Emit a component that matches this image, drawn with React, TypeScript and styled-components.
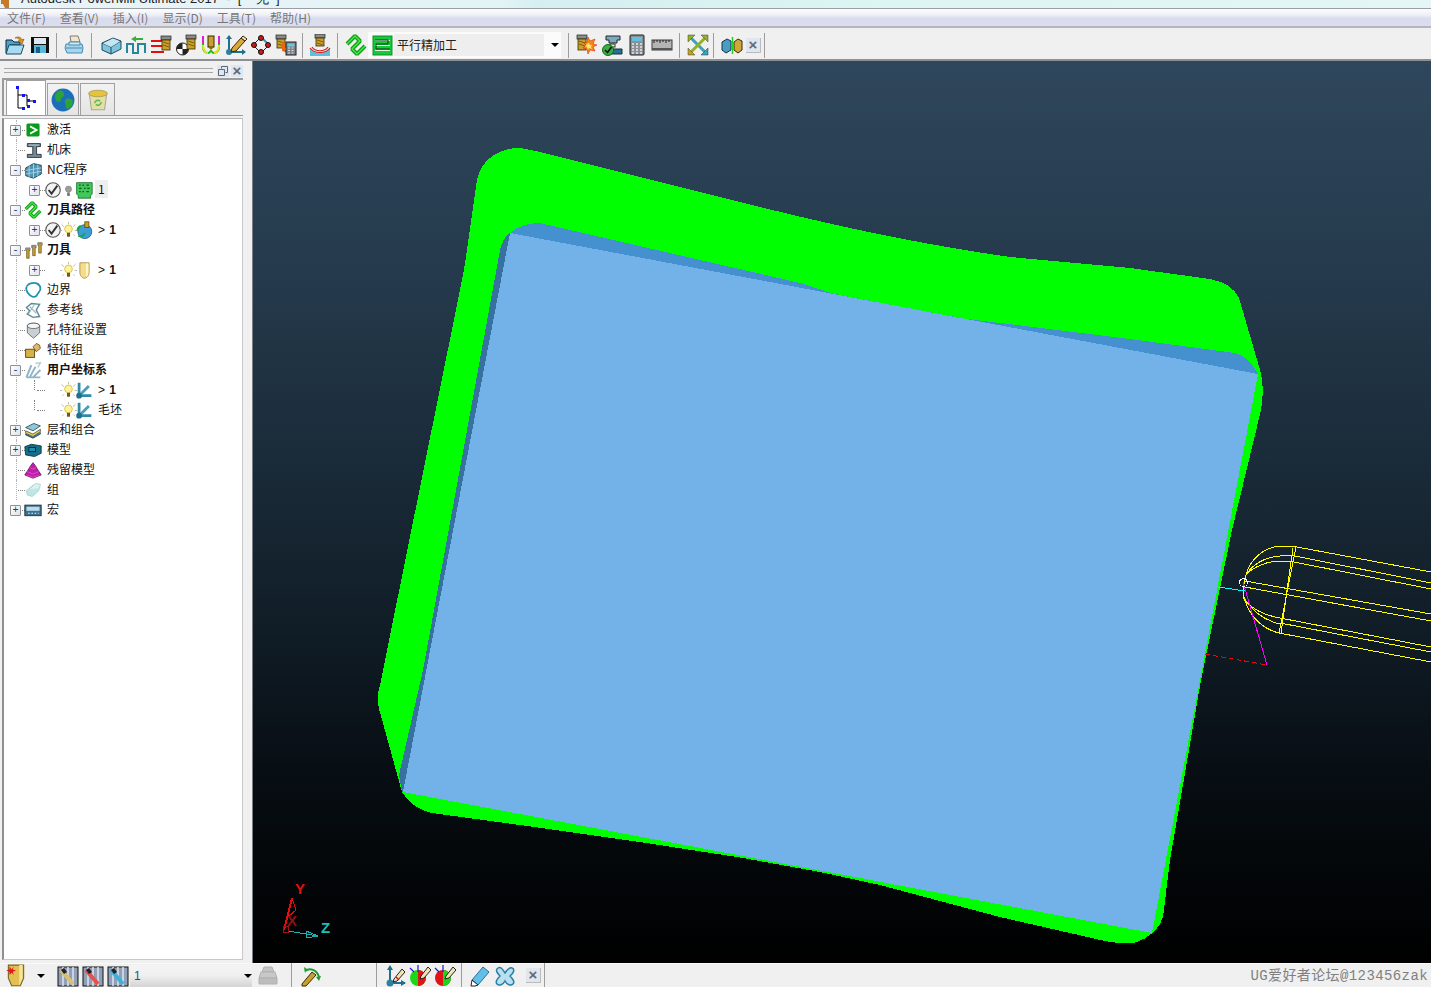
import React from 'react';
import styled, { createGlobalStyle } from 'styled-components';

const GlobalStyle = createGlobalStyle`
  html, body { margin: 0; padding: 0; overflow: hidden; background: #f0f0f0; }
  body { font-family: "Noto Sans CJK SC", "Liberation Sans", sans-serif; }
`;

const Page = styled.div`
  width: 1431px;
  height: 987px;
  display: flex;
  flex-direction: column;
  overflow: hidden;
  background: #f0f0f0;
`;

const TitleStrip = styled.div`
  height: 8px;
  background: linear-gradient(90deg, #eaf3f6 0%, #e2f4f6 35%, #d6eef0 38%, #dcf4f2 60%, #e4f6f6 100%);
  border-bottom: 1px solid #9a9fa6;
  overflow: hidden;
  display: flex;
  padding-left: 1px;
`;

const TitleText = styled.span`
  font: 13px/13px "Liberation Sans", sans-serif;
  color: #222;
  margin-top: -8px;
  margin-left: 12px;
  white-space: pre;
`;

const MenuBar = styled.div`
  height: 17px;
  padding-left: 7px;
  display: flex;
  gap: 14px;
  align-items: center;
  background: linear-gradient(180deg, #fdfdfe 0%, #eef0f7 35%, #d9dcee 55%, #dcdeef 100%);
  border-bottom: 2px solid #b4b6bc;
`;

const MenuItem = styled.span`
  font: 12px/17px "Noto Sans CJK SC", sans-serif;
  color: #777;
  white-space: nowrap;
`;

const Toolbar = styled.div`
  height: 28px;
  padding: 3px 0 0 2px;
  display: flex;
  align-items: center;
  background: #f0f0f0;
  border-bottom: 2px solid #8c8f94;
`;

const ToolButton = styled.div<{ $w?: number; $ml?: number }>`
  width: ${(p) => p.$w ?? 25}px;
  height: 24px;
  flex: none;
  margin-left: ${(p) => p.$ml ?? 0}px;
  display: flex;
  align-items: center;
  justify-content: center;
`;

const Sep = styled.div<{ $l: number; $r: number }>`
  width: 1px;
  height: 25px;
  flex: none;
  background: #9c9c9c;
  margin-left: ${(p) => p.$l}px;
  margin-right: ${(p) => p.$r}px;
`;

const Combo = styled.div`
  width: 193px;
  height: 26px;
  flex: none;
  display: flex;
  align-items: center;
  padding-left: 4px;
  box-sizing: border-box;
  background: #fbfbfb;
`;

const ComboField = styled.div`
  width: 150px;
  height: 22px;
  padding-left: 3px;
  box-sizing: border-box;
  background: #eeeeee;
  font: 12px/22px "Noto Sans CJK SC", sans-serif;
  color: #222;
`;

const DownArrow = styled.span<{ $ml: number }>`
  width: 0;
  height: 0;
  flex: none;
  margin-left: ${(p) => p.$ml}px;
  border-left: 4px solid transparent;
  border-right: 4px solid transparent;
  border-top: 4px solid #000;
`;

const CloseBox = styled.div<{ $ml: number }>`
  width: 14px;
  height: 14px;
  flex: none;
  margin-left: ${(p) => p.$ml}px;
  background: #dfe6f0;
  border-right: 1px solid #bbb;
  border-bottom: 1px solid #bbb;
  color: #5f6974;
  font: bold 15px/14px "Liberation Sans", sans-serif;
  text-align: center;
`;

const Main = styled.div`
  flex: 1;
  min-height: 0;
  display: flex;
`;

const SidePanel = styled.div`
  width: 253px;
  flex: none;
  box-sizing: border-box;
  padding: 3px 9px 3px 2px;
  display: flex;
  flex-direction: column;
  background: #f0f0f0;
  border-right: 1px solid #7a7d82;
`;

const Grip = styled.div`
  height: 13px;
  flex: none;
  display: flex;
  align-items: center;
  gap: 2px;
  padding-left: 2px;
`;

const GripLines = styled.div`
  width: 210px;
  height: 3px;
  margin-right: 2px;
  border-top: 1px solid #a8a8a8;
  border-bottom: 1px solid #a8a8a8;
`;

const GripButton = styled.div`
  width: 12px;
  height: 12px;
  flex: none;
  background: #dde6f2;
  color: #5f6974;
  display: flex;
  align-items: center;
  justify-content: center;
  font: bold 15px/12px "Liberation Sans", sans-serif;
`;

const TabBar = styled.div`
  height: 38px;
  width: 241px;
  flex: none;
  margin-top: 1px;
  padding: 1px 0 0 2px;
  display: flex;
  align-items: flex-end;
  box-sizing: border-box;
  border-top: 2px solid #9b9b9b;
  border-left: 2px solid #9b9b9b;
  border-bottom: 1px solid #9b9b9b;
`;

const Tab = styled.div<{ $active?: boolean; $w: number }>`
  width: ${(p) => p.$w}px;
  height: ${(p) => (p.$active ? 35 : 32)}px;
  flex: none;
  box-sizing: border-box;
  display: flex;
  align-items: center;
  justify-content: center;
  border: 1px solid #a0a0a0;
  border-bottom: none;
  background: ${(p) => (p.$active ? '#ffffff' : 'linear-gradient(180deg, #f2f2f2 0%, #e4e4e4 100%)')};
  margin-right: 1px;
`;

const TreeBox = styled.div`
  flex: 1;
  width: 241px;
  margin-top: 2px;
  padding-top: 1px;
  box-sizing: border-box;
  background: #fff;
  border-left: 2px solid #8f8f8f;
  border-right: 1px solid #c8c8c8;
  border-bottom: 1px solid #c8c8c8;
  border-top: 1px solid #b8b8b8;
`;

const Row = styled.div<{ $indent: number; $trunk?: boolean; $branch?: boolean }>`
  position: relative;
  height: 20px;
  margin-left: -2px;
  padding-left: ${(p) => p.$indent}px;
  display: flex;
  align-items: center;
  &::before {
    content: '';
    display: ${(p) => (p.$trunk ? 'block' : 'none')};
    position: absolute;
    left: 14px;
    top: 0;
    bottom: 0;
    border-left: 1px dotted #b4b4b4;
  }
  &::after {
    content: '';
    display: ${(p) => (p.$branch ? 'block' : 'none')};
    position: absolute;
    left: 32px;
    top: 0;
    height: 10px;
    border-left: 1px dotted #808080;
  }
`;

const Expander = styled.div`
  position: relative;
  z-index: 1;
  width: 9px;
  height: 9px;
  flex: none;
  border: 1px solid #8d9095;
  border-radius: 1px;
  background: linear-gradient(135deg, #fff, #dfe2e6);
  color: #24368a;
  font: 10px/9px "Liberation Mono", monospace;
  text-align: center;
  overflow: hidden;
  box-sizing: content-box;
  margin-right: -1px;
`;

const ExpanderGap = styled.div<{ $w: number }>`
  width: ${(p) => p.$w}px;
  flex: none;
`;

const Dots = styled.div<{ $w: number }>`
  width: ${(p) => p.$w}px;
  flex: none;
  height: 0;
  border-top: 1px dotted #808080;
`;

const IconSlot = styled.div<{ $w: number }>`
  width: ${(p) => p.$w}px;
  height: 18px;
  flex: none;
  display: flex;
  align-items: center;
  justify-content: center;
  svg { flex: none; }
`;

const Label = styled.span<{ $strong?: boolean; $selected?: boolean; $ml: number }>`
  margin-left: ${(p) => p.$ml}px;
  margin-bottom: 2px;
  font: ${(p) => (p.$strong ? 700 : 400)} 12px/18px "Noto Sans CJK SC", sans-serif;
  color: #111;
  white-space: pre;
  background: ${(p) => (p.$selected ? '#eeeeee' : 'transparent')};
  padding: ${(p) => (p.$selected ? '0 3px' : '0')};
`;

const Count = styled.span`
  font: 12px/18px "Liberation Sans", sans-serif;
  color: #111;
  white-space: pre;
  margin-left: 6px;
  b { margin-left: 1px; }
`;

const Viewport = styled.div`
  flex: 1;
  min-width: 0;
  background: linear-gradient(180deg, #2f475c 0%, #24394b 25%, #13212c 58%, #070d12 80%, #000 100%);
`;

const Scene = styled.svg`
  display: block;
  width: 1178px;
  height: 902px;
  shape-rendering: crispEdges;
  text {
    font-family: "Liberation Sans", sans-serif;
    font-weight: 700;
    font-size: 15px;
  }
`;

const BottomBar = styled.div`
  height: 24px;
  flex: none;
  display: flex;
  align-items: center;
  padding-left: 3px;
  background: #f0f0f0;
  border-top: 1px solid #fafafa;
  box-sizing: border-box;
`;

const BottomCombo = styled.div`
  width: 122px;
  height: 22px;
  flex: none;
  display: flex;
  align-items: center;
  padding-left: 4px;
  box-sizing: border-box;
  background: linear-gradient(180deg, #f4f4f4 0%, #f0f0f0 45%, #d4d4d4 100%);
  font: 12px/22px "Liberation Sans", sans-serif;
  color: #1f4f88;
`;

const Watermark = styled.div`
  margin-left: auto;
  padding-right: 3px;
  font: 14px/22px "Liberation Mono", "Noto Sans CJK SC", monospace;
  letter-spacing: 0.4px;
  color: #808080;
  white-space: nowrap;
`;

function Mill({ x, y, h = 14 }: { x: number; y: number; h?: number }) {
  return (
    <g>
      <rect x={x - 1} y={y} width="10" height="4" fill="#8b8b8b" stroke="#222" strokeWidth="0.7" />
      <rect x={x} y={y + 4} width="8" height={h - 4} fill="#c9a02c" stroke="#3a2a00" strokeWidth="0.8" />
      <path d={`M${x + 1} ${y + 6}l6 2M${x + 1} ${y + 9}l6 2`} stroke="#6a4b00" strokeWidth="0.8" />
    </g>
  );
}

const G = ({ s = 22, children }: { s?: number; children: React.ReactNode }) => (
  <svg width={s} height={s} viewBox="0 0 22 22" fill="none">
    {children}
  </svg>
);

const IconOpen = () => (
  <G>
    <path d="M2 6h6l2 2h6v3H6L3 19H2z" fill="#4aa2cf" stroke="#123" />
    <path d="M5 11h15l-3 9H2z" fill="#a6dcf2" stroke="#1d4a60" />
    <path d="M11 4c3-2 6-1 7 2l2-1-2 5-4-3 2-.5c-1-2-3-3-5-2.500z" fill="#e8941a" stroke="#7a4a00" strokeWidth="0.6" />
  </G>
);

const IconSave = () => (
  <G>
    <rect x="2" y="3" width="18" height="16" fill="#111" />
    <rect x="5" y="4" width="12" height="6" fill="#dfe8ee" />
    <rect x="5" y="11" width="12" height="8" fill="#58b8dc" />
    <rect x="7" y="13" width="4" height="6" fill="#1c5f80" />
  </G>
);

const IconPrint = () => (
  <G>
    <path d="M7 2h8l2 6H8z" fill="#f0e6c8" stroke="#7d7d7d" />
    <path d="M3 10h16l1 4-1 5H4l-2-5z" fill="#a6d6ee" stroke="#4a8aac" />
    <path d="M3 14h16" stroke="#4a8aac" />
    <path d="M6 8h11v3H6z" fill="#cdeaf6" stroke="#4a8aac" />
  </G>
);

const IconBox = () => (
  <G>
    <path d="M2 9l11-5 8 3v8l-10 5-9-4z" fill="#7fc4dc" stroke="#1f4a5e" />
    <path d="M2 9l9 4 10-6M11 13v7" stroke="#1f4a5e" />
    <path d="M3 9.500l8 3.500 9-5.500-7-3z" fill="#c4e6f2" />
  </G>
);

const IconPulse = () => (
  <G>
    <path d="M2 19V10h6v9h5V10h7v9" stroke="#26869e" strokeWidth="2" />
    <path d="M6 5l5-3v2h7v2h-7v2z" fill="#35b03a" />
  </G>
);

const IconToolLines = () => (
  <G>
    <path d="M1 7h12M1 12h12M1 18h13" stroke="#e01010" strokeWidth="2" />
    <Mill x={12} y={2} h={14} />
  </G>
);

const IconToolBall = () => (
  <G>
    <circle cx="7.500" cy="15" r="6" fill="#fff" stroke="#222" />
    <path d="M7.500 9a6 6 0 0 0-6 6h6zM7.500 15v6a6 6 0 0 0 6-6z" fill="#222" />
    <Mill x={12} y={1} h={14} />
  </G>
);

const IconToolU = () => (
  <G>
    <path d="M3 2v11c0 4 3 6 5 6s2-2 3-2 1 2 3 2 5-2 5-6V2" stroke="#15c015" strokeWidth="2" />
    <path d="M3 2v8M19 2v8" stroke="#e020c8" strokeWidth="2" />
    <path d="M3 11c0 5 3 8 5 8M19 11c0 5-3 8-5 8" stroke="#f0e020" strokeWidth="2" />
    <rect x="8" y="2" width="6" height="11" fill="#c9a02c" stroke="#3a2a00" />
    <path d="M8 13h6l-3 3z" fill="#8a6a10" />
  </G>
);

const IconPencilAxes = () => (
  <G>
    <path d="M4 4v14h14" stroke="#1f6f8e" strokeWidth="2" />
    <path d="M4 1l-3 4h6zM21 18l-4-3v6z" fill="#1f6f8e" />
    <circle cx="4" cy="18" r="3" fill="#2f7f9e" />
    <path d="M7 14l9-10 4 3-9 10-5 1z" fill="#d8a838" stroke="#3a2a00" />
    <path d="M16 4l2-2 4 3-2 2z" fill="#e8e0c8" stroke="#3a2a00" />
  </G>
);

const IconNodes = () => (
  <G>
    <path d="M11 3L3 11l8 8 8-8z" stroke="#222" strokeWidth="1" />
    <path d="M11 3l8 8" stroke="#3c90b8" strokeWidth="2" />
    <circle cx="11" cy="4" r="2.500" fill="#d01818" stroke="#111" />
    <circle cx="4" cy="11" r="2.500" fill="#d01818" stroke="#111" />
    <circle cx="18" cy="11" r="2.500" fill="#d01818" stroke="#111" />
    <circle cx="11" cy="18" r="2.500" fill="#d01818" stroke="#111" />
  </G>
);

const IconToolCalc = () => (
  <G>
    <Mill x={2} y={1} h={13} />
    <path d="M7 8l5 2-2 5 3 4-6-2z" fill="#e86a10" />
    <rect x="11" y="8" width="10" height="13" fill="#7d8488" stroke="#222" />
    <rect x="12.500" y="9.500" width="7" height="3" fill="#6fc4de" />
    <path d="M13 14h2M16.500 14h2M13 16.500h2M16.500 16.500h2M13 19h2M16.500 19h2" stroke="#ddd" />
  </G>
);

const IconMillSurface = () => (
  <G>
    <Mill x={7} y={0} h={12} />
    <path d="M1 15c4 5 16 5 20-1v8H1z" fill="#5cc0dc" />
    <path d="M3 13c3 5 13 5 16 0M1 14c4 6 16 6 20 0" stroke="#d82020" strokeWidth="1.200" />
  </G>
);

const IconPaths = ({ s = 22 }: { s?: number }) => (
  <G s={s}>
    <path d="M2 10L10 2L15 7L7 15L12 20L20 12" stroke="#10a018" strokeWidth="4" strokeLinejoin="bevel" />
    <path d="M2 10L10 2L15 7L7 15L12 20L20 12" stroke="#4ae84a" strokeWidth="1.400" strokeLinejoin="bevel" />
  </G>
);

const IconRaster = () => (
  <G>
    <rect x="1" y="2" width="19" height="19" fill="#18c838" stroke="#0c8f2c" />
    <path d="M3 6h15v1H3zM3 11h15v1H3zM3 16h15v1H3z" fill="#e8f6e0" />
    <path d="M3 6h13v4H4v5h14" stroke="#073a18" strokeWidth="1" />
  </G>
);

const IconToolBurst = () => (
  <G>
    <Mill x={2} y={1} h={15} />
    <path d="M8 9l3-1 1-5 2 4 5-2-2 5 4 1-4 2 2 4-5-1-2 4-1-5-4-1 3-3z" fill="#f08a12" stroke="#e02a10" strokeWidth="0.600" />
    <path d="M11 10l2-1 1 2 2 0-1 2 1 2-3-1-1 2-1-3-2-1z" fill="#ffe070" />
  </G>
);

const IconMachineCheck = () => (
  <G>
    <path d="M5 2h14v4h-3v3H8V6H5z" fill="#7fa8b8" stroke="#1a2a33" />
    <rect x="9" y="10" width="5" height="3" fill="#f0e8b8" stroke="#333" />
    <path d="M9 15h12v5H9z" fill="#2a6f92" stroke="#10303f" />
    <circle cx="7" cy="16" r="5.500" fill="#36b040" stroke="#136a1f" />
    <path d="M4 16l2.500 2.500L10.500 13" stroke="#111" strokeWidth="1.600" />
  </G>
);

const IconCalc = () => (
  <G>
    <rect x="4" y="1" width="14" height="20" rx="1" fill="#8b9195" stroke="#222" />
    <rect x="6" y="3" width="10" height="4" fill="#5fc0df" />
    <path d="M6 10h2M10 10h2M14 10h2M6 13h2M10 13h2M14 13h2M6 16h2M10 16h2M14 16h2M6 19h2M10 19h2M14 19h2" stroke="#e8e8e8" strokeWidth="1.500" />
  </G>
);

const IconRuler = () => (
  <G>
    <rect x="1" y="6" width="20" height="10" fill="#b4b4b4" stroke="#3a3a3a" />
    <path d="M3 6v3M6 6v2M9 6v3M12 6v2M15 6v3M18 6v2" stroke="#222" />
    <rect x="1" y="14" width="20" height="2" fill="#555" />
  </G>
);

const IconFit = () => (
  <G>
    <path d="M3 3l16 16" stroke="#3ea0b8" strokeWidth="3" />
    <path d="M19 3L3 19" stroke="#96b01e" strokeWidth="3" />
    <path d="M1 1h7L1 8z" fill="#98b020" stroke="#444" strokeWidth="0.500" />
    <path d="M21 21h-7l7-7z" fill="#3ea0b8" stroke="#244" strokeWidth="0.500" />
    <path d="M21 1h-7l7 7z" fill="#98b020" stroke="#444" strokeWidth="0.500" />
    <path d="M1 21h7l-7-7z" fill="#c8a018" stroke="#444" strokeWidth="0.500" />
  </G>
);

const IconCubes = () => (
  <G>
    <path d="M1 8l5-3 4 2v9l-5 3-4-3z" fill="#4a9cc0" stroke="#13354a" />
    <path d="M13 8l4-3 4 2v9l-4 3-4-3z" fill="#d0a838" stroke="#3a2a00" />
    <path d="M11.500 3v17" stroke="#20d020" strokeWidth="1.500" />
  </G>
);

const IconTree = () => (
  <svg width="24" height="26" viewBox="0 0 24 26" fill="none">
    <path d="M4 3v20h6M4 10h9v6h6M13 16v5" stroke="#000" />
    <rect x="2" y="1" width="3" height="3" fill="#1414f0" />
    <rect x="8" y="9" width="3" height="3" fill="#1414f0" />
    <rect x="13" y="14" width="3" height="3" fill="#1414f0" />
    <rect x="19" y="15" width="3" height="3" fill="#1414f0" />
    <rect x="13" y="20" width="3" height="3" fill="#1414f0" />
    <rect x="8" y="22" width="3" height="3" fill="#1414f0" />
  </svg>
);

const IconGlobe = () => (
  <G s={24}>
    <circle cx="11" cy="11" r="10.500" fill="#1b6fb8" />
    <path d="M6 3c3-2 6 0 6 3s-3 2-3 5-4 2-5-1 0-5 2-7zM14 10c3-1 6 0 6 3s-3 6-5 6-1-3-2-5 0-3 1-4z" fill="#2da23a" />
  </G>
);

const IconBin = () => (
  <G s={24}>
    <path d="M3 5h16l-2 15H5z" fill="#e6dfa4" stroke="#a8a8a0" />
    <ellipse cx="11" cy="5" rx="8.500" ry="3" fill="#e8c23a" stroke="#b0a860" />
    <path d="M8 14a3 3 0 0 1 5-2M14 13a3 3 0 0 1-5 2" stroke="#5cb85c" strokeWidth="1.400" />
  </G>
);

const IconActivate = () => (
  <G s={16}>
    <rect x="2" y="2" width="18" height="18" rx="2" fill="#089a18" />
    <path d="M7 6l9 5-9 5" stroke="#fff" strokeWidth="2.400" />
  </G>
);

const IconMachine = () => (
  <G s={17}>
    <path d="M3 2h17v4h-5v10h6v4H3v-4h7V6H3z" fill="#6f8a98" stroke="#222" />
    <path d="M5 4h13" stroke="#c8d8e0" />
  </G>
);

const IconNcProgram = () => (
  <G s={19}>
    <path d="M2 8l9-5 9 2v10l-9 5-9-3z" fill="#4f95b4" stroke="#1a3a4a" />
    <path d="M11 3v17M6 5v14M16 4v14M2 11l18-3M2 15l18-3" stroke="#b8dcec" strokeWidth="0.900" />
  </G>
);

const IconCheck = () => (
  <G s={16}>
    <circle cx="11" cy="11" r="10" fill="#f2f2f2" stroke="#555" strokeWidth="1.500" />
    <path d="M5 11l4 5 8-11" stroke="#333" strokeWidth="2.600" />
  </G>
);

const IconBulb = ({ lit }: { lit?: boolean }) => (
  <G s={lit ? 17 : 15}>
    {lit && <path d="M11 0v3M2 3l3 3M20 3l-3 3M0 11h3M19 11h3M3 18l2-2M19 18l-2-2" stroke="#b8b8a0" strokeWidth="1.200" />}
    <circle cx="11" cy="9" r={lit ? 5 : 4.5} fill={lit ? '#fff39a' : '#9c9c9c'} stroke={lit ? '#d8b830' : '#8a8a8a'} />
    <rect x="9" y="14" width="4" height="5" fill={lit ? '#6a5a20' : '#777'} />
  </G>
);

const IconNcSheet = () => (
  <G s={18}>
    <path d="M2 2h19v14l-2 2v3H4v-3l-2-2z" fill="#42c85a" stroke="#12702a" />
    <path d="M5 5h2M9 5h2M14 5h3M5 9h3M11 9h2M15 9h3M5 13h2M9 13h2M14 13h3" stroke="#0d5a20" strokeWidth="1.400" />
  </G>
);

const IconPathGlobe = () => (
  <G s={18}>
    <circle cx="12" cy="13" r="8.500" fill="#3c9cd6" stroke="#1a5a8a" />
    <path d="M3 12c0-3 2-5 4-6M4 18c3 2 6 0 8-3" stroke="#12a83a" strokeWidth="2.200" />
    <rect x="12" y="1" width="5" height="7" fill="#c9a02c" stroke="#6a4b00" />
  </G>
);

const IconTools = () => (
  <svg width="19" height="19" viewBox="0 0 22 22" fill="none">
    <path d="M2 8h5v3H6v9H3v-9H2zM9 5h5v3h-1v9h-3V8H9zM16 2h5v3h-1v9h-3V5h-1z" fill="#c9a02c" stroke="#5a4510" strokeWidth="0.700" />
    <path d="M2 8h5v2H2zM9 5h5v2H9zM16 2h5v2h-5z" fill="#8b8b8b" />
  </svg>
);

const IconCutter = () => (
  <G s={17}>
    <path d="M5 1h12v12c0 5-3 8-6 8s-6-3-6-8z" fill="#f4dc8c" stroke="#a88a30" />
    <path d="M13 2h3v11c0 3-1 5-3 6z" fill="#fff6d0" />
  </G>
);

const IconBoundary = () => (
  <G s={18}>
    <path d="M8 3c5-2 11 0 12 5s-3 6-4 9-6 3-8 1-4-3-5-7 2-7 5-8z" stroke="#1d93b0" strokeWidth="2.200" />
  </G>
);

const IconRefLine = () => (
  <G s={18}>
    <path d="M3 8l6-5 10 1-4 7 4 8-8 1-7-4 3-4z" stroke="#5f8a98" strokeWidth="1.800" />
    <path d="M7 7l8 8M13 4L6 15" stroke="#9cb8c4" strokeWidth="1.400" />
  </G>
);

const IconHole = () => (
  <G s={17}>
    <ellipse cx="11" cy="5" rx="8" ry="3.500" fill="#e8eef0" stroke="#555" />
    <path d="M3 5v9l8 7 8-7V5" fill="#c8d0d4" stroke="#555" />
    <ellipse cx="11" cy="5" rx="8" ry="3.500" fill="#f4f6f8" stroke="#555" />
  </G>
);

const IconFeature = () => (
  <G s={18}>
    <rect x="2" y="10" width="11" height="10" fill="#d8b048" stroke="#4a3a10" />
    <path d="M11 7l4-4 4 2 1 4-5 4z" fill="#e0b86a" stroke="#6a4a20" />
  </G>
);

const IconUcsGroup = () => (
  <G s={18}>
    <path d="M3 20L9 5M7 20l7-13M11 20l9-9M3 20h17" stroke="#8fb6c6" strokeWidth="2.400" />
    <path d="M14 3l6-1-3 6" stroke="#b8ccd4" strokeWidth="1.800" />
  </G>
);

const IconUcs = () => (
  <G s={18}>
    <path d="M5 2v16h15" stroke="#2f8aa8" strokeWidth="3.400" />
    <path d="M5 18L17 6" stroke="#4c9cb8" strokeWidth="3.400" />
    <circle cx="5" cy="18" r="3.500" fill="#1f6f8e" />
  </G>
);

const IconLayers = () => (
  <G s={18}>
    <path d="M2 8l10-5 8 3-9 6z" fill="#8fc8d8" stroke="#245" />
    <path d="M2 12l9 4 9-6v3l-9 6-9-4z" fill="#e6d050" stroke="#554" />
    <path d="M2 16l9 4 9-6v2l-9 5-9-4z" fill="#66b0c8" stroke="#245" />
  </G>
);

const IconModel = () => (
  <G s={18}>
    <path d="M1 7l8-3 12 2v9l-8 4-11-2z" fill="#146f8a" stroke="#0a2a3a" />
    <rect x="6" y="8" width="8" height="5" fill="#2090ac" stroke="#062030" />
  </G>
);

const IconStock = () => (
  <G s={18}>
    <path d="M11 2l3 4 3 5 4 6-10 4-10-4 4-6 3-5z" fill="#c01ea8" stroke="#60105a" />
    <path d="M7 8l4 2 4-2M4 13l7 3 7-3M3 17l8 3 8-3" stroke="#f060d8" strokeWidth="0.800" />
  </G>
);

const IconGroup = () => (
  <G s={18}>
    <path d="M3 12l8-7 8 1-1 6-8 7-6-2z" fill="#bfe6e4" stroke="#a6cfd0" />
    <path d="M6 10l8-7 6 1-1 5" fill="#d8f2f0" stroke="#a6cfd0" />
  </G>
);

const IconMacro = () => (
  <G s={18}>
    <rect x="1" y="5" width="20" height="13" fill="#3a6f8e" stroke="#1a2a33" />
    <rect x="3" y="7" width="16" height="5" fill="#bcdcec" />
    <path d="M5 15h2M9 15h2M13 15h2M17 15h1" stroke="#eee" strokeWidth="1.400" />
  </G>
);

const IconToolSpark = () => (
  <G s={24}>
    <path d="M4 1h14v12l-3 7H7l-3-7z" fill="#e2c052" stroke="#7a6420" />
    <path d="M14 1h3v12l-3 7z" fill="#f4e4a0" />
    <path d="M5 2l2 3 2-3-1 3 3 1-3 1 1 3-2-2-2 2 0-3-3-1 3-1z" fill="#e01a1a" />
  </G>
);

const IconStripes = ({ tone }: { tone: string }) => (
  <G>
    <rect x="1" y="2" width="20" height="19" fill="#8fa0b8" stroke="#111" />
    <path d="M6 2v19M11 2v19M16 2v19" stroke="#dfe4ee" strokeWidth="1.500" />
    <path d="M4 5l12 14" stroke={tone} strokeWidth="4" />
    <path d="M4 5l3-2 3 4-3 2z" fill="#222" />
  </G>
);

const IconGreyStack = () => (
  <G>
    <path d="M7 2h8l2 5H5z" fill="#c4c4c4" stroke="#b0b0b0" />
    <path d="M4 7h14l2 6H2z" fill="#c8c8c8" stroke="#b0b0b0" />
    <path d="M2 13h18v6H2z" fill="#bdbdbd" stroke="#b0b0b0" />
  </G>
);

const IconPencilTurn = () => (
  <G>
    <path d="M3 19L13 7l4 3L7 21H3z" fill="#c8a030" stroke="#3a2a00" />
    <path d="M6 6c5-4 12-1 14 6" stroke="#1f9a2f" strokeWidth="2" />
    <path d="M17 12l3 4 2-5z" fill="#1f9a2f" />
    <path d="M5 2l3 2-2 4z" fill="#1f9a2f" />
  </G>
);

const IconAxesPencil = () => (
  <G>
    <path d="M6 4v14h15" stroke="#1f6f8e" strokeWidth="2" />
    <path d="M6 0L3 5h6zM22 18l-5-3v6z" fill="#1f6f8e" />
    <circle cx="6" cy="18" r="3.500" fill="#2f7f9e" />
    <path d="M10 14l8-10 3 3-8 9-4 1z" fill="#f0e4b4" stroke="#222" />
    <path d="M12 12l3 3" stroke="#e01010" strokeWidth="1.400" />
  </G>
);

const IconSplitBall = ({ flip }: { flip?: boolean }) => (
  <G>
    <circle cx="9" cy="13" r="8" fill={flip ? '#e01414' : '#18d818'} />
    <path d="M9 5a8 8 0 0 1 0 16z" fill={flip ? '#18d818' : '#e01414'} />
    <path d="M9 0v7M1 3l4 4" stroke="#1818e0" strokeWidth="1.200" />
    <path d="M12 11l7-9 3 3-7 8-4 1z" fill="#f0e4b4" stroke="#222" />
  </G>
);

const IconEraser = () => (
  <G>
    <path d="M3 15L14 2l6 5L9 20z" fill="#62c0e8" stroke="#2a6e98" />
    <path d="M3 15l6 5-3 1H2z" fill="#fff" stroke="#222" />
  </G>
);

const IconCross = () => (
  <G>
    <path d="M4 3c3-2 5 2 7 5 2-3 4-6 7-5s2 5-2 8c3 3 5 6 3 8s-6 1-8-3c-2 4-6 5-8 3s0-5 3-8C3 8 1 5 4 3z" fill="#b8e0f0" stroke="#2a7fa4" strokeWidth="1.500" />
  </G>
);

type TreeItem = {
  key: string;
  level: 0 | 1;
  expander?: '+' | '-';
  icon?: React.ReactNode;
  check?: boolean;
  bulb?: 'lit' | 'dim';
  label?: string;
  count?: boolean;
  strong?: boolean;
  selected?: boolean;
  branch?: boolean;
};

const tree: TreeItem[] = [
  { key: 'activate', level: 0, expander: '+', icon: <IconActivate />, label: '激活' },
  { key: 'machine', level: 0, icon: <IconMachine />, label: '机床' },
  { key: 'nc', level: 0, expander: '-', icon: <IconNcProgram />, label: 'NC程序' },
  { key: 'nc1', level: 1, expander: '+', check: true, bulb: 'dim', icon: <IconNcSheet />, label: '1', selected: true },
  { key: 'paths', level: 0, expander: '-', icon: <IconPaths s={18} />, label: '刀具路径', strong: true },
  { key: 'paths1', level: 1, expander: '+', check: true, bulb: 'lit', icon: <IconPathGlobe />, count: true },
  { key: 'tools', level: 0, expander: '-', icon: <IconTools />, label: '刀具', strong: true },
  { key: 'tools1', level: 1, expander: '+', bulb: 'lit', icon: <IconCutter />, count: true },
  { key: 'boundary', level: 0, icon: <IconBoundary />, label: '边界' },
  { key: 'refline', level: 0, icon: <IconRefLine />, label: '参考线' },
  { key: 'hole', level: 0, icon: <IconHole />, label: '孔特征设置' },
  { key: 'feature', level: 0, icon: <IconFeature />, label: '特征组' },
  { key: 'ucs', level: 0, expander: '-', icon: <IconUcsGroup />, label: '用户坐标系', strong: true },
  { key: 'ucs1', level: 1, branch: true, bulb: 'lit', icon: <IconUcs />, count: true },
  { key: 'ucs2', level: 1, branch: true, bulb: 'lit', icon: <IconUcs />, label: '毛坯' },
  { key: 'layers', level: 0, expander: '+', icon: <IconLayers />, label: '层和组合' },
  { key: 'model', level: 0, expander: '+', icon: <IconModel />, label: '模型' },
  { key: 'stock', level: 0, icon: <IconStock />, label: '残留模型' },
  { key: 'group', level: 0, icon: <IconGroup />, label: '组' },
  { key: 'macro', level: 0, expander: '+', icon: <IconMacro />, label: '宏' },
];

function TreeRow({ item, last }: { item: TreeItem; last: boolean }) {
  const isChild = item.level === 1;
  return (
    <Row $indent={isChild ? (item.expander ? 27 : 31) : 8} $trunk={!last} $branch={isChild && !!item.branch}>
      {item.expander ? (
        <Expander>{item.expander}</Expander>
      ) : (
        <ExpanderGap $w={isChild ? 4 : 8} />
      )}
      <Dots $w={isChild ? (item.expander ? 6 : 8) : item.expander ? 5 : 7} />
      {isChild && <IconSlot $w={15}>{item.check && <IconCheck />}</IconSlot>}
      {item.bulb && (
        <IconSlot $w={16}>
          <IconBulb lit={item.bulb === 'lit'} />
        </IconSlot>
      )}
      <IconSlot $w={16}>{item.icon}</IconSlot>
      {item.label && (
        <Label $strong={item.strong} $selected={item.selected} $ml={item.selected ? 3 : 6}>
          {item.label}
        </Label>
      )}
      {item.count && (
        <Count>
          {'> '}
          <b>1</b>
        </Count>
      )}
    </Row>
  );
}

function Model() {
  return (
    <g>
      <path
        fill="#00ff00"
        d="M517 148C523 148 530 150 540 152L760 207C860 232 940 247 1010 257L1130 268L1210 279C1225 282 1234 288 1239 298L1260 370C1263 380 1264 392 1261 410L1232 530L1201 680L1170 860L1163 917C1160 928 1150 938 1134 943C1125 944 1117 943 1105 941L1000 917L880 885L820 872L740 857.500L640 842L520 825L432 813C418 810 408 802 402 792L381 716C377 705 377 695 380 685L464 270L477 180C481 160 498 149 517 148Z"
      />
      <path fill="#72b2e8" d="M510 233L1258 374L1152 933L403 792Z" />
      <path
        fill="#4591d0"
        d="M510 233C518 226 528 223 540 223L800 283L835 294L960 318L1130 339L1235 353C1246 356 1253 364 1258 374Z"
      />
      <path
        fill="#36719f"
        d="M510 233C505 236 502 242 500 250L423 670L399 775L402 792L403 792Z"
      />
    </g>
  );
}

function Cutter() {
  return (
    <g fill="none" stroke="#ffff00" strokeWidth="1">
      <path d="M1297 547L1431 572M1295 556L1431 583M1294 562L1431 589" />
      <path d="M1245 581L1431 614M1245 587L1431 621" />
      <path d="M1280 618L1431 647M1280 623L1431 652M1279 633L1431 662" />
      <path d="M1297 547C1292 546 1286 546 1280 546C1262 548 1250 560 1246 575" />
      <path d="M1295 556C1288 555 1284 555 1280 556C1264 557 1252 565 1246 575" />
      <path d="M1294 562C1288 561 1285 561 1280 561C1266 561 1252 568 1246 575" />
      <path d="M1246 575C1243 585 1243 590 1244 595" />
      <path d="M1243 597C1248 605 1258 614 1280 618" />
      <path d="M1244 598C1250 608 1262 620 1280 624" />
      <path d="M1243 593C1246 610 1258 628 1279 633" />
      <path d="M1296 547L1279 633M1293 548L1281 633" />
      <path stroke="#00ffff" d="M1218 587L1245 591" />
      <path stroke="#ff00ff" d="M1243 582L1267 665" />
      <path stroke="#ff0000" strokeDasharray="5 3" d="M1205 654L1267 665" />
      <circle cx="1243.500" cy="582.500" r="4" stroke="#ffffff" />
    </g>
  );
}

function Triad() {
  return (
    <g fill="none">
      <path stroke="#e01010" strokeWidth="2" d="M284 930L292 898" />
      <path stroke="#e01010" d="M288 917l4-19 4 12z" />
      <path stroke="#18b0b0" d="M288 931L318 936M306 931l12 5-12 2z" />
      <rect x="283" y="926" width="5" height="6" stroke="#a01010" />
      <text x="295" y="894" fill="#e01010">
        Y
      </text>
      <text x="287" y="926" fill="#901010" fontSize="12">
        X
      </text>
      <text x="321" y="933" fill="#18c0c0">
        Z
      </text>
    </g>
  );
}

export default function App() {
  return (
    <Page>
      <GlobalStyle />
      <TitleStrip>
        <svg width="8" height="8" viewBox="0 0 8 8">
          <path d="M0 0h8v8H4L2 4H0z" fill="#c87a28" />
        </svg>
        <TitleText>{'Autodesk PowerMill Ultimate 2017  -  [    无  ]'}</TitleText>
      </TitleStrip>
      <MenuBar>
        {['文件(F)', '查看(V)', '插入(I)', '显示(D)', '工具(T)', '帮助(H)'].map((m) => (
          <MenuItem key={m}>{m}</MenuItem>
        ))}
      </MenuBar>
      <Toolbar>
        <ToolButton><IconOpen /></ToolButton>
        <ToolButton><IconSave /></ToolButton>
        <Sep $l={4} $r={4} />
        <ToolButton><IconPrint /></ToolButton>
        <Sep $l={5} $r={6} />
        <ToolButton><IconBox /></ToolButton>
        <ToolButton><IconPulse /></ToolButton>
        <ToolButton><IconToolLines /></ToolButton>
        <ToolButton><IconToolBall /></ToolButton>
        <ToolButton><IconToolU /></ToolButton>
        <ToolButton><IconPencilAxes /></ToolButton>
        <ToolButton><IconNodes /></ToolButton>
        <ToolButton><IconToolCalc /></ToolButton>
        <Sep $l={4} $r={4} />
        <ToolButton><IconMillSurface /></ToolButton>
        <Sep $l={5} $r={5} />
        <ToolButton><IconPaths /></ToolButton>
        <Combo>
          <IconRaster />
          <ComboField>平行精加工</ComboField>
          <DownArrow $ml={7} />
        </Combo>
        <Sep $l={7} $r={5} />
        <ToolButton><IconToolBurst /></ToolButton>
        <ToolButton><IconMachineCheck /></ToolButton>
        <ToolButton><IconCalc /></ToolButton>
        <ToolButton><IconRuler /></ToolButton>
        <Sep $l={5} $r={5} />
        <ToolButton><IconFit /></ToolButton>
        <Sep $l={3} $r={5} />
        <ToolButton><IconCubes /></ToolButton>
        <CloseBox $ml={2}>×</CloseBox>
        <Sep $l={3} $r={0} />
      </Toolbar>
      <Main>
        <SidePanel>
          <Grip>
            <GripLines />
            <GripButton>
              <svg width="10" height="10" viewBox="0 0 10 10" fill="none" stroke="#5f6974">
                <path d="M3.500 2.500V.5h6v6h-2M.5 3.500h6v6h-6z" />
              </svg>
            </GripButton>
            <GripButton>×</GripButton>
          </Grip>
          <TabBar>
            <Tab $active $w={40}><IconTree /></Tab>
            <Tab $w={32}><IconGlobe /></Tab>
            <Tab $w={35}><IconBin /></Tab>
          </TabBar>
          <TreeBox>
            {tree.map((item, i) => (
              <TreeRow key={item.key} item={item} last={i === tree.length - 1} />
            ))}
          </TreeBox>
        </SidePanel>
        <Viewport>
          <Scene viewBox="253 61 1178 902">
            <Model />
            <Cutter />
            <Triad />
          </Scene>
        </Viewport>
      </Main>
      <BottomBar>
        <ToolButton><IconToolSpark /></ToolButton>
        <DownArrow $ml={9} />
        <ToolButton $ml={10}><IconStripes tone="#d8c070" /></ToolButton>
        <ToolButton><IconStripes tone="#e85050" /></ToolButton>
        <ToolButton><IconStripes tone="#40b0d8" /></ToolButton>
        <BottomCombo>
          1
          <DownArrow $ml={103} />
        </BottomCombo>
        <ToolButton $ml={3}><IconGreyStack /></ToolButton>
        <Sep $l={11} $r={5} />
        <ToolButton><IconPencilTurn /></ToolButton>
        <ToolButton $w={54} />
        <Sep $l={0} $r={5} />
        <ToolButton><IconAxesPencil /></ToolButton>
        <ToolButton><IconSplitBall /></ToolButton>
        <ToolButton><IconSplitBall flip /></ToolButton>
        <Sep $l={4} $r={5} />
        <ToolButton><IconEraser /></ToolButton>
        <ToolButton><IconCross /></ToolButton>
        <CloseBox $ml={9}>×</CloseBox>
        <Sep $l={3} $r={0} />
        <Watermark>UG爱好者论坛@123456zak</Watermark>
      </BottomBar>
    </Page>
  );
}
